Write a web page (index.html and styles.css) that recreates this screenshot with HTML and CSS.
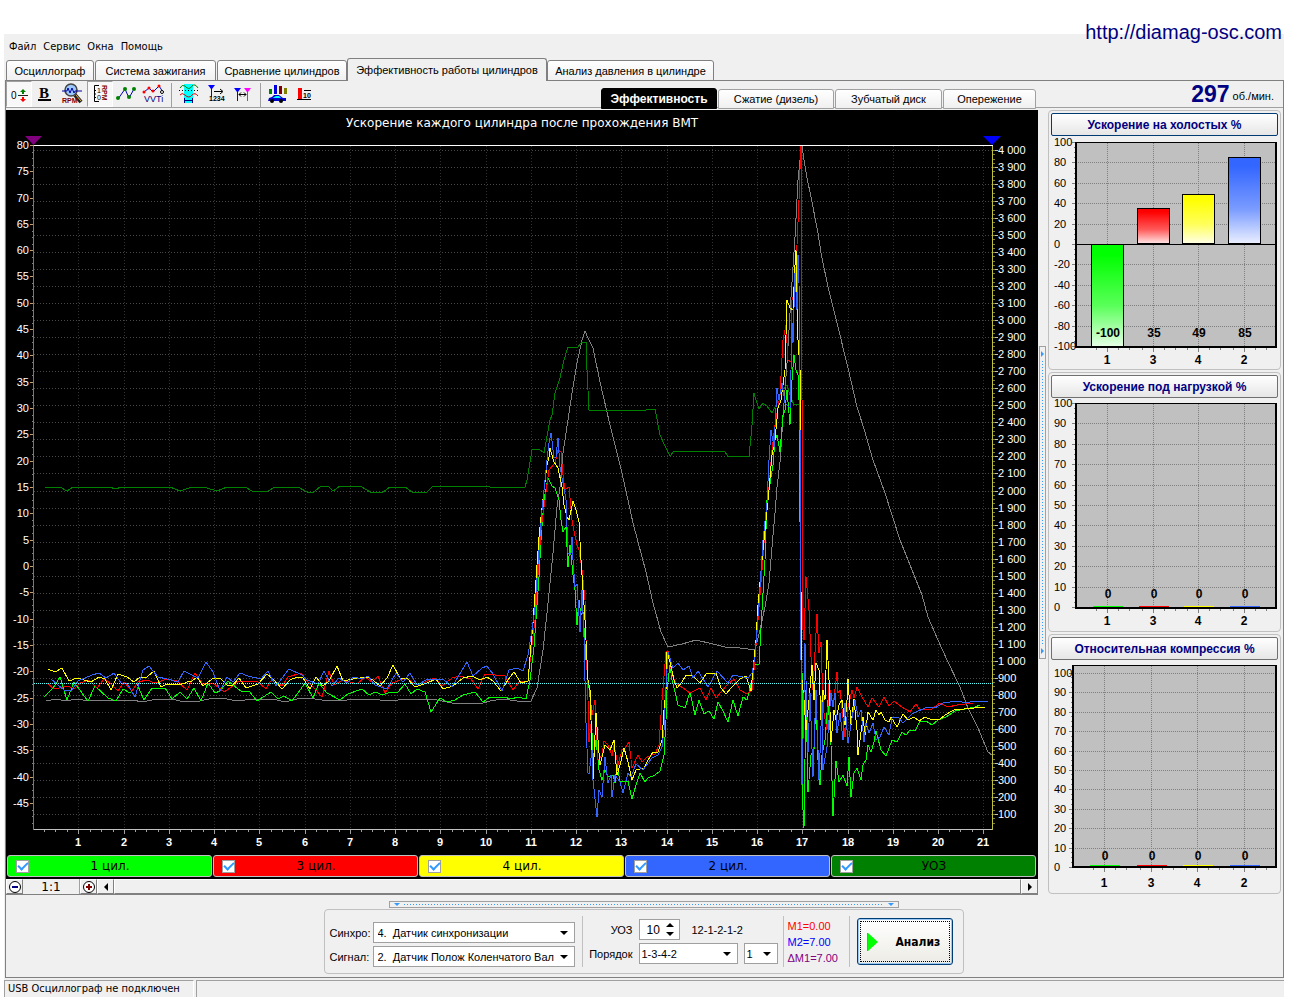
FILE: index.html
```html
<!DOCTYPE html>
<html lang="ru">
<head>
<meta charset="utf-8">
<title>Диамаг — эффективность работы цилиндров</title>
<link rel="stylesheet" href="styles.css">
</head>
<body>
<a class="site-link" href="#site">http://diamag-osc.com</a>
<div class="window">
  <nav class="menu">
    <a href="#file">Файл</a><a href="#service">Сервис</a><a href="#windows">Окна</a><a href="#help">Помощь</a>
  </nav>

  <div class="tabs">
    <button class="tab tab-osc">Осциллограф</button>
    <button class="tab tab-ign">Система зажигания</button>
    <button class="tab tab-cmp">Сравнение цилиндров</button>
    <button class="tab tab-eff active">Эффективность работы цилиндров</button>
    <button class="tab tab-prs">Анализ давления в цилиндре</button>
  </div>

  <main class="page">
    <div class="toolbar">
      <div class="tools">
        <button class="tool pressed" aria-label="Ноль"><svg viewBox="0 0 26 26"><text x="5" y="18" class="t10">0</text><path d="M12 14.500H22" stroke="#222" /><path d="M17 8l3 3h-2v2h-2v-2h-2z" fill="#008000"/><path d="M17 21l3-3h-2v-2h-2v2h-2z" fill="red"/></svg></button>
        <button class="tool" aria-label="Толщина"><svg viewBox="0 0 26 26"><text x="6" y="17" class="bold-b">B</text><path d="M5 19h13" stroke="#000" stroke-width="2"/></svg></button>
        <button class="tool" aria-label="Обороты"><svg viewBox="0 0 26 26"><path d="M15 14l6 7" stroke="#222" stroke-width="4"/><path d="M16 14l5 6" stroke="#e0b040" stroke-width="1"/><circle cx="11" cy="9" r="6" fill="#9cc8ff" stroke="#444" stroke-width="1.500"/><path d="M2 10h5l1-3 2 5 2-5 2 5 1-2h7" fill="none" stroke="#0000a0"/><text x="2" y="22" class="t7 maroon b">RPM</text></svg></button>
        <button class="tool pressed" aria-label="Шкала оборотов"><svg viewBox="0 0 26 26"><path d="M12 4.500H7.500V20.500H12M7 9.500h2M7 13h2M7 16.500h2" fill="none" stroke="#000"/><text x="10" y="12" class="t7">1</text><text x="10" y="19" class="t7">0</text><text transform="translate(15 4) rotate(90)" class="t7 maroon b">RPM</text></svg></button>
        <button class="tool" aria-label="График"><svg viewBox="0 0 26 26"><path d="M4 18L11 8l4 9 5-9" fill="none" stroke="#0000c0"/><g fill="#008000"><circle cx="4" cy="17" r="2"/><circle cx="11" cy="8" r="2"/><circle cx="15" cy="16" r="2"/><circle cx="20" cy="8" r="2"/></g></svg></button>
        <button class="tool" aria-label="VVTi"><svg viewBox="0 0 26 26"><path d="M3 11l5-4 4 4 6-6 4 6" fill="none" stroke="#0000d0"/><g fill="red"><circle cx="3" cy="11" r="1.500"/><circle cx="8" cy="7" r="1.500"/><circle cx="12" cy="10" r="1.500"/><circle cx="18" cy="5" r="1.500"/></g><circle cx="21" cy="11" r="1.500" fill="#fff" stroke="#000"/><text x="3" y="21" class="t9 navy">VVTi</text></svg></button>
        <span class="sep"></span>
        <button class="tool" aria-label="Окно сигнала"><svg viewBox="0 0 26 26"><path d="M8 3h9v19H8z" fill="#0ff"/><path d="M4 7q2-4 5-2 4 5 7 0 3-3 6 2" fill="none" stroke="#008000"/><path d="M4 14q2-3 5 0 4 4 7 0 3-3 6 1" fill="none" stroke="#e00000"/><path d="M3 9.500h20" stroke="#000" stroke-dasharray="1 2"/><path d="M8.500 17v5M16.500 17v5M9 19.500h7" stroke="#000080"/></svg></button>
        <button class="tool" aria-label="Номера"><svg viewBox="0 0 26 26"><path d="M5 4h7l-3 4v8H8V8z" fill="#0000ff"/><path d="M11 10.500h8M17 8l3 2.500-3 2.500" fill="none" stroke="#000"/><text x="6" y="20" class="t7 b">1234</text></svg></button>
        <button class="tool" aria-label="Маркеры"><svg viewBox="0 0 26 26"><path d="M4 7h7l-3 4v9H7v-9z" fill="#0000ff"/><path d="M14 7h7l-3 4v9h-1v-9z" fill="#f0f"/><path d="M9 13.500h7M11 11.500l-2 2 2 2M14 11.500l2 2-2 2" fill="none" stroke="#000"/></svg></button>
        <span class="sep"></span>
        <button class="tool" aria-label="Отчёт"><svg viewBox="0 0 26 26"><path d="M4 8h3v5H4z" fill="green"/><path d="M9 4h3v9H9z" fill="#0000e0"/><path d="M14 5h3v8h-3z" fill="#800000"/><path d="M19 7h3v6h-3z" fill="#808000"/><path d="M4 17q3 0 5-3h5l4 3h3v3H3z" fill="#0000d0"/><path d="M9 16l2-1h3l2 2H8z" fill="#0ff"/><circle cx="7" cy="20" r="2"/><circle cx="16" cy="20" r="2"/></svg></button>
        <button class="tool" aria-label="Порог"><svg viewBox="0 0 26 26"><path d="M6 7h4v11H6z" fill="red"/><path d="M5 18.500h14M12 9.500h7" stroke="#000"/><text x="11" y="17" class="t7 b">10</text></svg></button>
      </div>
      <div class="subtabs">
        <button class="subtab st-eff active">Эффективность</button>
        <button class="subtab st-cmp">Сжатие (дизель)</button>
        <button class="subtab st-gear">Зубчатый диск</button>
        <button class="subtab st-adv">Опережение</button>
      </div>
      <div class="rpm"><strong>297</strong> об./мин.</div>
    </div>

    <div class="workspace">
      <section class="scope">
        <svg id="scope" class="plot" viewBox="6 110 1032 744" role="img" aria-label="Ускорение каждого цилиндра"></svg>
        <div class="legend">
          <label class="series s1"><input type="checkbox" checked><span>1 цил.</span></label>
          <label class="series s3"><input type="checkbox" checked><span>3 цил.</span></label>
          <label class="series s4"><input type="checkbox" checked><span>4 цил.</span></label>
          <label class="series s2"><input type="checkbox" checked><span>2 цил.</span></label>
          <label class="series s5"><input type="checkbox" checked><span>УОЗ</span></label>
        </div>
        <div class="scroller">
          <button class="raised small" aria-label="Уменьшить"><svg viewBox="0 0 14 14"><circle cx="7" cy="7" r="5.500" fill="#fff" stroke="#000"/><path d="M4 7h6" stroke="#000080" stroke-width="2"/></svg></button>
          <span class="ratio">1:1</span>
          <button class="raised small" aria-label="Увеличить"><svg viewBox="0 0 14 14"><circle cx="7" cy="7" r="5.500" fill="#fff" stroke="#000"/><path d="M4 7h6M7 4v6" stroke="#800000" stroke-width="2"/></svg></button>
          <button class="raised small" aria-label="Влево"><svg viewBox="0 0 14 14"><path d="M9 3v8L5 7z"/></svg></button>
          <div class="raised thumb"></div>
          <button class="raised small" aria-label="Вправо"><svg viewBox="0 0 14 14"><path d="M5 3v8l4-4z"/></svg></button>
        </div>
      </section>

      <div class="vsplit"><i></i></div>

      <aside class="side">
        <section class="card"><button class="card-title focused">Ускорение на холостых %</button><svg id="idle" class="plot" viewBox="1051 136 227 232"></svg></section>
        <section class="card"><button class="card-title">Ускорение под нагрузкой %</button><svg id="load" class="plot" viewBox="1051 399 227 232"></svg></section>
        <section class="card"><button class="card-title">Относительная компрессия %</button><svg id="comp" class="plot" viewBox="1051 661 227 232"></svg></section>
      </aside>
    </div>

    <div class="hsplit"><i></i></div>

    <form class="panel" onsubmit="return false">
      <div class="inputs">
        <label for="sync">Синхро:</label>
        <span class="drop"><select id="sync"><option>4.&nbsp; Датчик синхронизации</option></select></span>
        <label for="signal">Сигнал:</label>
        <span class="drop"><select id="signal"><option>2.&nbsp; Датчик Полож Коленчатого Вала</option></select></span>
      </div>
      <div class="order">
        <label for="uoz">УОЗ</label>
        <div class="line"><span class="spin"><input id="uoz" type="text" value="10"></span><span>12-1-2-1-2</span></div>
        <label for="ord">Порядок</label>
        <div class="line"><span class="drop wide"><select id="ord"><option>1-3-4-2</option></select></span><span class="drop narrow"><select aria-label="Номер цилиндра"><option>1</option></select></span></div>
      </div>
      <div class="marks"><span class="m1">M1=0.00</span><span class="m2">M2=7.00</span><span class="dm">ΔM1=7.00</span></div>
      <button class="analyze" type="submit"><svg viewBox="0 0 12 20"><path d="M1 1l10 9-10 9z" fill="#00ff00"/><path d="M.500 1v18" stroke="#888"/></svg><span>Анализ</span></button>
    </form>
  </main>

  <footer class="status"><span>USB Осциллограф не подключен</span><span></span></footer>
</div>
<script src="charts.js"></script>
</body>
</html>
```

FILE: styles.css
```css
* { box-sizing: border-box; }

body {
  margin: 0;
  position: relative;
  background: #fff;
  color: #000;
  font: 11px/14px "Liberation Sans", Arial, sans-serif;
}

button, input, select { font: inherit; color: inherit; margin: 0; }
svg { display: block; }

.site-link {
  position: absolute;
  top: 20px;
  right: 14px;
  font-size: 20px;
  line-height: 24px;
  color: #000080;
  text-decoration: none;
}

.window {
  margin: 34px 12px 0 4px;
  background: #f0f0f0;
}

.menu {
  display: flex;
  gap: 7px;
  height: 24px;
  padding: 6px 5px 0;
  font-family: "DejaVu Sans Condensed", "DejaVu Sans", sans-serif;
}
.menu a { color: #000; text-decoration: none; }

/* Main tabs */
.tabs {
  display: flex;
  align-items: flex-end;
  gap: 1px;
  height: 23px;
  padding-left: 2px;
  margin-bottom: -1px;
  position: relative;
}
.tab, .subtab {
  height: 21px;
  padding: 0;
  border: 1px solid #808080;
  border-radius: 3px 3px 0 0;
  background: linear-gradient(#fff, #f0f0f0);
  white-space: nowrap;
}
.tab-osc { width: 88px; }
.tab-ign { width: 121px; }
.tab-cmp { width: 130px; }
.tab-eff { width: 200px; }
.tab-prs { width: 167px; }
.tab.active { height: 23px; border-bottom: 0; background: #f0f0f0; margin: 0 -1px; }

.page {
  margin-left: 1px;
  padding-right: 2px;
  border: 1px solid #808080;
}

/* Toolbar */
.toolbar {
  display: grid;
  grid-template-columns: 595px minmax(0, 1fr) auto;
  height: 27px;
  margin-right: -2px;
  border-bottom: 1px solid #a0a0a0;
}
.tools { display: flex; gap: 1px; }
.tool { width: 26px; height: 26px; padding: 0; border: 0; background: none; }
.tool svg { width: 26px; height: 26px; }
.tool.pressed { background: #f8f8f8; border: 1px solid; border-color: #a0a0a0 #fff #fff #a0a0a0; }
.tool.pressed svg { margin: -1px; }
.sep { width: 1px; margin: 2px 3px; background: #a0a0a0; }
.t7 { font-size: 7px; }
.t9 { font-size: 9px; }
.t10 { font-size: 10px; }
.b { font-weight: bold; }
.maroon { fill: #800000; }
.navy { fill: #000080; }
.bold-b { font: bold 15px "Liberation Serif", serif; }

.subtabs { display: flex; align-items: flex-end; gap: 1px; }
.subtab { height: 20px; border-color: #a0a0a0; }
.subtab.active { height: 21px; background: #000; color: #fff; border-color: #000; font-weight: bold; font-size: 12px; }
.st-eff { width: 116px; }
.st-cmp { width: 116px; }
.st-gear { width: 107px; }
.st-adv { width: 93px; }

.rpm { padding: 0 9px 0 0; line-height: 26px; white-space: nowrap; }
.rpm strong { font-size: 23px; color: #000080; vertical-align: -2px; }

/* Work area */
.workspace {
  display: grid;
  grid-template-columns: minmax(0, 1fr) 10px 233px;
  padding-top: 2px;
  align-items: start;
}
.plot { width: 100%; height: auto; font-family: "Liberation Sans", Arial, sans-serif; }
.plot text { font-size: 11px; }
.plot .title { font-family: "DejaVu Sans", sans-serif; font-size: 12px; }
.plot .strong { font-weight: bold; }
.plot .value { font-size: 12px; font-weight: bold; }
.scope { background: #000; }

.legend {
  display: grid;
  grid-template-columns: repeat(5, minmax(0, 1fr));
  gap: 1px;
  padding: 1px 2px 2px 1px;
}
.series {
  display: flex;
  align-items: center;
  height: 22px;
  padding-left: 8px;
  border: 1px solid #c0c0c0;
  border-radius: 3px;
  font: 12px/20px "DejaVu Sans", sans-serif;
}
.series span { flex: 1; text-align: center; padding-right: 20px; }
.s1 { background: #00ff00; }
.s3 { background: #ff0000; }
.s4 { background: #ffff00; }
.s2 { background: #3366ff; }
.s5 { background: #008000; }
.series input {
  appearance: none;
  width: 13px;
  height: 13px;
  border: 1px solid #a0a0a0;
  background: #fff;
  display: grid;
  place-items: center;
}
.series input:checked::after {
  content: "";
  width: 8px;
  height: 4px;
  margin-top: -2px;
  border: solid #3399ff;
  border-width: 0 0 2px 2px;
  transform: rotate(-45deg);
}

.scroller {
  display: grid;
  grid-template-columns: 17px 57px 17px 17px minmax(0, 1fr) 17px;
  grid-template-rows: 15px;
  border-bottom: 1px solid #808080;
  background: #f0f0f0;
}
.raised {
  padding: 0;
  border: 1px solid;
  border-color: #fff #808080 #808080 #fff;
  background: #f0f0f0;
  display: grid;
  place-items: center;
  overflow: hidden;
}
.raised svg { width: 14px; height: 14px; }
.ratio {
  border-right: 1px solid #a0a0a0;
  text-align: center;
  font: 12px/17px "DejaVu Sans", sans-serif;
}

.vsplit { align-self: center; justify-self: end; width: 7px; height: 313px; margin-right: 2px; border: 1px solid #a0a0a0; display: grid; position: relative; }
.vsplit i { width: 1px; margin: 14px 2px; background: repeating-linear-gradient(#3399ff 0 1px, transparent 1px 3px); }
.vsplit::before, .vsplit::after { content: ""; position: absolute; left: 1px; border: solid transparent; border-width: 3px 0 3px 3px; border-left-color: #3399ff; }
.vsplit::before { top: 4px; }
.vsplit::after { bottom: 4px; }

/* Side charts */
.side { display: grid; gap: 2px; }
.card { border: 1px solid #c0c0c0; border-radius: 4px; padding: 2px 2px 1px; }
.card-title {
  display: block;
  width: 100%;
  height: 23px;
  padding: 0;
  border: 1px solid #707070;
  border-radius: 2px;
  background: linear-gradient(#fff, #e6e6e6);
  color: #000080;
  font-weight: bold;
  font-size: 12px;
}
.card-title.focused { border-color: #003c74; }

.hsplit { width: 510px; height: 7px; margin: 6px auto 0; border: 1px solid #a0a0a0; position: relative; display: grid; }
.hsplit i { height: 1px; margin: 2px 14px; background: repeating-linear-gradient(90deg, #3399ff 0 1px, transparent 1px 3px); }
.hsplit::before, .hsplit::after { content: ""; position: absolute; top: 1px; border: solid transparent; border-width: 3px 3px 0; border-top-color: #3399ff; }
.hsplit::before { left: 4px; }
.hsplit::after { right: 4px; }

/* Control panel */
.panel {
  display: grid;
  grid-template-columns: 245px 194px 67px 96px;
  gap: 7px;
  width: 640px;
  height: 65px;
  margin: 1px auto 3px;
  padding: 6px 5px;
  border: 1px solid #c0c0c0;
  border-radius: 4px;
}
.inputs {
  display: grid;
  grid-template-columns: 39px 202px;
  column-gap: 4px;
  row-gap: 3px;
  align-content: end;
  align-items: center;
}
.drop { display: block; position: relative; height: 21px; border: 1px solid #a0a0a0; background: #fff; }
.drop select { appearance: none; width: 100%; height: 19px; padding: 0 20px 0 4px; border: 0; background: none; }
.drop::after { content: ""; position: absolute; right: 6px; top: 8px; border: solid transparent; border-width: 4px 4px 0; border-top-color: #000; pointer-events: none; }
.order {
  display: grid;
  grid-template-columns: 50px 139px;
  column-gap: 6px;
  row-gap: 3px;
  align-content: center;
  align-items: center;
  border-left: 1px solid #c0c0c0;
}
.order label { text-align: right; }
.line { display: flex; gap: 6px; align-items: center; white-space: nowrap; }
.wide { width: 99px; flex: none; }
.drop.wide select { padding-left: 2px; }
.narrow { width: 34px; flex: none; }
.drop.narrow select { padding: 0 0 0 2px; }
.spin { position: relative; width: 41px; height: 21px; margin-right: 6px; border: 1px solid #a0a0a0; background: #fff; }
.spin input { width: 26px; height: 19px; padding: 0 0 0 7px; border: 0; background: none; font-size: 12px; }
.spin::before, .spin::after { content: ""; position: absolute; right: 5px; border: solid transparent; }
.spin::before { top: 3px; border-width: 0 4px 4px; border-bottom-color: #000; }
.spin::after { bottom: 3px; border-width: 4px 4px 0; border-top-color: #000; }
.marks { display: grid; align-content: center; grid-auto-rows: 16px; padding-left: 4px; border: solid #c0c0c0; border-width: 0 1px; line-height: 16px; white-space: nowrap; }
.m1 { color: #ff0000; }
.m2 { color: #0000ff; }
.dm { color: #800080; }
.analyze {
  align-self: center;
  display: flex;
  align-items: center;
  gap: 17px;
  height: 47px;
  padding: 0 9px;
  border: 1px solid #003c74;
  border-radius: 3px;
  background: linear-gradient(#fff, #ecebe5);
  box-shadow: inset 0 0 0 1px #9cc8f5;
  outline: 1px dotted #000;
  outline-offset: -4px;
  font: bold 12px/14px "DejaVu Sans Condensed", "DejaVu Sans", sans-serif;
}
.analyze svg { width: 12px; height: 20px; }

.status { display: grid; grid-template-columns: 190px minmax(0, 1fr); gap: 2px; height: 19px; padding-top: 2px; font: 11px/16px "DejaVu Sans Condensed", "DejaVu Sans", sans-serif; }
.status span { border: solid #a0a0a0; border-width: 1px 0 0 1px; padding-left: 3px; }
.status span:first-child { border-right-width: 1px; border-right-color: #fff; }
```

FILE: charts.js
```js
const NS = 'http://www.w3.org/2000/svg';

function add(parent, tag, attrs, text) {
  const el = document.createElementNS(NS, tag);
  for (const key in attrs) el.setAttribute(key, attrs[key]);
  if (text !== undefined) el.textContent = text;
  parent.appendChild(el);
  return el;
}

function line(svg, x1, y1, x2, y2, stroke, dash) {
  const attrs = { x1: x1 + 0.5, y1: y1 + 0.5, x2: x2 + 0.5, y2: y2 + 0.5, stroke, 'shape-rendering': 'crispEdges' };
  if (dash) attrs['stroke-dasharray'] = dash;
  return add(svg, 'line', attrs);
}

function label(svg, x, y, text, anchor, fill, cls) {
  add(svg, 'text', { x, y, 'text-anchor': anchor, fill, class: cls || '' }, text);
}

const traces = [
  ['#808080', '46,701 57,699 65,701 78,699 88,701 98,700 133,700 142,702 157,699 172,699 180,701 200,701 213,698 227,699 237,701 253,699 277,700 285,702 297,699 307,698 322,700 340,701 355,699 370,699 390,701 407,699 432,699 452,703 483,703 490,701 503,699 517,701 531,701 537,688 543,650 547,613 550,583 553,553 557,507 560,487 563,453 568,420 572,393 577,363 582,340 585,331 588,338 593,348 600,382 610,425 622,473 633,523 646,572 653,603 661,632 668,647 682,644 696,640 713,644 725,647 740,648 755,650 760,630 765,607 769,583 772,547 775,513 777,487 780,462 783,417 787,363 791,297 795,237 798,180 801,150 802,146 804,160 807,178 811,197 818,233 821,253 828,287 837,323 848,368 857,407 865,432 873,460 885,493 900,540 922,595 928,617 938,640 947,660 960,687 968,708 978,728 988,752 992,755'],
  ['#008000', '45,487 60,487 67,491 73,487 110,487 115,489 122,487 170,487 180,491 192,487 207,488 217,491 227,487 245,487 252,491 268,491 275,487 298,487 307,492 314,492 321,486 328,486 333,491 340,486 362,487 370,492 383,492 390,487 405,487 412,492 427,492 432,487 440,486 485,486 490,487 525,487 527,480 532,450 539,449 544,453 550,420 552,415 555,393 560,378 564,360 568,347 578,347 581,343 586,342 587,370 589,410 646,410 655,409 660,435 665,446 670,456 674,451 707,451 709,452 724,451 728,456 749,457 752,425 754,393 756,400 759,409 763,403 767,406 772,413 777,403 782,390 787,385 790,395 794,405 800,404'],
  ['#00ff00', '44,697 53,688 60,677 67,700 74,682 82,693 88,701 95,686 108,698 116,701 123,689 130,693 137,684 144,700 152,688 165,688 172,699 180,692 187,699 194,688 201,701 208,683 215,693 220,691 228,681 242,692 249,691 257,701 271,692 278,699 284,696 292,701 298,693 305,683 313,698 319,683 327,693 340,700 348,694 362,689 369,695 375,692 383,695 390,692 397,693 405,684 411,694 417,689 425,692 431,712 440,698 447,702 455,700 463,695 475,692 483,702 490,697 504,697 511,699 518,697 526,699 530,680 534,647 539,577 541,540 544,500 548,478 552,486 555,488 559,500 561,520 563,532 566,527 568,567 570,545 573,575 575,590 577,625 579,600 581,615 583,612 586,660 588,680 591,705 593,760 596,740 599,770 602,780 605,770 608,777 613,775 615,783 617,765 620,782 628,781 632,799 636,785 640,773 645,782 648,778 655,775 660,771 664,755 666,720 667,690 670,665 672,680 675,692 678,705 685,708 690,692 695,715 699,700 704,714 709,711 714,719 718,702 723,711 728,722 733,700 738,716 743,697 747,700 752,680 755,665 759,664 762,610 765,560 767,500 769,490 773,465 775,440 777,435 780,452 783,415 785,410 787,390 790,425 792,380 794,355 796,370 798,375 799,400 801,640 802,670 803,810 804,828 805,760 806,690 808,792 811,755 814,750 816,700 818,760 820,785 822,755 825,740 828,700 831,745 833,816 836,761 839,782 843,775 847,786 849,757 851,797 854,773 857,768 861,780 863,765 866,760 868,745 871,752 874,742 876,731 881,750 886,756 892,740 897,742 902,732 906,735 910,730 915,731 920,721 926,721 932,725 938,720 946,717 955,711 965,709 975,707 980,705'],
  ['#ff0000', '47,683 54,689 68,686 74,689 80,683 89,680 97,688 104,679 110,683 118,691 124,682 132,691 138,682 147,680 155,683 167,679 177,681 187,690 195,673 202,683 213,683 224,692 233,686 238,681 257,681 266,689 272,679 282,686 288,677 301,673 308,682 315,689 322,697 329,671 334,685 343,680 357,684 365,677 372,682 378,676 385,693 392,683 406,678 417,685 435,678 442,686 452,678 460,676 471,679 478,689 485,674 505,676 513,690 519,682 528,681 531,653 535,620 537,590 541,530 546,492 549,470 555,463 558,450 561,452 563,475 565,490 569,487 572,520 574,531 577,545 579,550 582,570 585,600 586,640 588,700 589,742 592,715 595,700 598,760 602,755 604,741 608,745 612,756 614,745 618,765 622,750 625,748 629,742 632,768 638,755 642,762 647,757 655,754 659,745 662,700 666,652 668,651 672,675 676,683 683,688 690,693 700,688 706,700 711,688 716,698 721,692 727,685 734,679 740,690 747,694 752,690 754,670 756,645 758,620 762,570 765,530 768,500 772,450 775,425 778,407 780,395 783,340 786,325 788,360 791,362 792,300 795,290 797,245 799,200 800,170 801,146 802,400 802,620 804,640 806,577 809,610 811,657 813,690 817,614 819,653 821,642 822,673 824,713 827,730 829,684 833,707 837,672 838,693 840,690 845,737 848,707 852,690 854,698 857,687 862,697 868,707 872,698 879,707 884,697 889,706 894,701 902,707 910,712 916,704 920,710 932,709 940,703 948,707 957,705 973,703'],
  ['#ffff00', '48,669 55,672 62,668 69,681 77,678 91,682 99,677 105,679 111,690 118,674 127,677 134,682 140,677 147,677 154,671 161,687 167,684 180,685 187,682 192,681 197,677 203,686 212,679 220,678 227,685 232,686 239,678 246,688 258,684 267,674 273,679 282,689 290,680 297,677 303,678 310,689 316,677 323,686 329,681 337,666 343,681 353,679 367,677 373,680 380,686 387,678 393,665 400,678 407,678 415,687 427,683 436,679 443,689 453,686 463,678 472,676 480,680 487,677 493,681 501,691 508,680 514,672 521,683 528,681 530,657 533,623 536,580 539,537 541,517 544,490 547,465 549,457 550,448 554,462 558,468 562,487 564,505 567,517 569,520 573,501 576,510 579,522 581,560 583,590 585,620 587,660 588,680 590,690 592,750 593,780 596,713 598,740 600,765 605,745 610,750 614,740 617,775 620,765 624,748 628,762 632,780 636,770 644,768 648,760 653,752 658,752 662,740 664,710 666,690 667,652 670,662 674,680 677,688 682,682 686,675 692,675 700,683 706,674 716,673 721,688 726,694 732,687 740,679 746,676 751,691 753,670 756,640 758,605 762,560 766,520 769,490 772,455 775,440 778,408 781,400 785,370 787,300 790,308 793,310 795,265 796,250 798,340 800,370 800,500 802,680 804,700 806,730 809,700 812,665 814,700 816,663 819,670 821,720 823,690 825,700 827,640 829,680 831,742 834,710 836,720 839,705 842,700 845,725 847,700 848,679 851,725 854,699 857,730 858,755 863,717 865,735 868,712 873,720 876,710 879,715 881,712 885,720 889,722 891,717 897,727 903,714 908,720 914,717 919,721 925,717 932,720 940,719 945,715 954,710 964,709 985,707'],
  ['#3366ff', '51,679 64,690 72,690 78,681 92,675 99,673 106,678 114,673 121,683 127,683 135,697 143,670 149,666 158,677 167,679 178,682 184,671 198,678 206,662 213,672 220,691 227,677 233,682 240,673 248,676 261,679 268,671 276,686 289,669 302,675 307,680 318,684 324,671 332,686 339,678 347,683 353,677 362,679 368,676 375,685 387,689 396,673 403,682 410,673 417,685 428,679 443,679 452,687 458,677 467,662 473,676 482,668 487,666 493,674 502,691 509,670 517,668 523,671 528,655 532,630 535,607 539,550 542,510 547,460 549,443 551,433 554,458 556,457 558,438 560,467 563,483 566,500 568,553 571,553 572,537 573,560 575,587 577,584 580,632 582,590 584,637 586,723 588,773 589,774 592,750 593,780 597,817 599,790 602,797 605,757 608,783 611,775 612,797 615,775 620,782 623,793 628,773 631,777 636,764 643,770 652,758 658,755 662,747 664,730 666,687 668,652 673,668 678,663 683,670 689,666 693,678 698,671 708,687 717,671 728,683 733,675 748,678 752,673 755,657 759,603 763,540 767,503 769,460 771,430 774,447 777,388 779,400 782,383 785,403 790,408 791,370 792,323 793,343 795,273 797,310 798,255 799,283 800,430 801,660 802,785 804,693 805,643 808,753 810,693 813,777 816,690 819,780 822,700 823,770 827,747 831,693 833,707 835,693 837,733 840,713 843,740 845,703 848,743 855,700 858,717 861,710 864,742 866,723 869,733 873,723 876,740 880,737 884,727 889,735 892,718 898,717 903,723 912,714 927,707 935,708 943,703 957,701 967,703 973,701 988,701'],
];

function drawScope(svg) {
  const left = 33, right = 992, top = 145, bottom = 829;
  add(svg, 'rect', { x: 6, y: 110, width: 1032, height: 744, fill: '#000' });
  label(svg, 522, 127, 'Ускорение каждого цилиндра после прохождения ВМТ', 'middle', '#fff', 'title');

  // Right scale sets the horizontal grid
  for (let v = 100; v <= 4000; v += 100) {
    const y = Math.round(814 - (v - 100) * 664 / 3900);
    line(svg, left, y, right, y, '#484848', '1 2');
    line(svg, right, y, right + 5, y, '#c0c0c0');
    label(svg, 998, y + 4, v >= 1000 ? Math.floor(v / 1000) + ' ' + String(v % 1000).padStart(3, '0') : v, 'start', '#fff');
  }
  for (let v = 50; v <= 4000; v += 25) {
    const y = Math.round(814 - (v - 100) * 664 / 3900);
    line(svg, right, y, right + 2, y, '#808040');
  }
  for (let v = -45; v <= 80; v += 5) {
    const y = Math.round(566 - v * 5.264);
    line(svg, left - 4, y, left, y, '#c0a070');
    for (let k = 1; k < 4; k++) line(svg, left - 2, Math.round(y + k * 6.5), left, Math.round(y + k * 6.5), '#808080');
    label(svg, 29, y + 4, v, 'end', '#fff');
  }
  for (let n = 1; n <= 21; n++) {
    const x = Math.round(left + n * 45.25);
    line(svg, x, top, x, bottom, '#303030', '1 2');
    for (let k = 0; k < 4; k++) {
      const tx = Math.round(x - k * 11.3);
      line(svg, tx, bottom, tx, bottom + (k ? 2 : 4), '#a0a0a0');
    }
    label(svg, x, 846, n, 'middle', '#fff', 'strong');
  }
  line(svg, left, top, right, top, '#fff');
  line(svg, left, bottom, right, bottom, '#c0c0c0');
  line(svg, left, top, left, bottom, '#40a040');
  line(svg, right, top, right, bottom, '#c0c040');
  for (const [stroke, points] of traces) {
    add(svg, 'polyline', { points, stroke, fill: 'none', 'shape-rendering': 'crispEdges' });
  }
  line(svg, left, 683, right, 683, '#60ffff', '1 1');
  add(svg, 'path', { d: 'M25 136h17l-8.500 9z', fill: '#800080' });
  add(svg, 'path', { d: 'M983 136h18l-9 9z', fill: '#0000ff' });
}

const colors = ['#00ff00', '#ff0000', '#ffff00', '#3366ff'];
const names = [1, 3, 4, 2];

function drawBars(id, o) {
  const svg = document.getElementById(id);
  const defs = add(svg, 'defs', {});
  add(svg, 'rect', { x: o.left, y: o.top, width: 1276 - o.left, height: o.bottom - o.top, fill: '#c0c0c0' });
  const count = (o.max - o.min) / o.step;
  for (let i = 0; i <= count; i++) {
    const y = Math.round(o.y0 - i * (o.y0 - o.y100) / count);
    line(svg, o.left, y, 1276, y, '#808080', '1 1');
    line(svg, o.left - 4, y, o.left, y, '#808080');
    if (i < count) for (let k = 1; k < 4; k++) line(svg, o.left - 2, y - k * 5, o.left, y - k * 5, '#808080');
    label(svg, 1054, y + 4, o.min + i * o.step, 'start', '#000');
  }
  o.xs.forEach((x, i) => {
    line(svg, x, o.top, x, o.bottom, '#808080', '1 1');
    for (let k = -1; k < 3; k++) line(svg, x + k * 11, o.bottom, x + k * 11, o.bottom + (k ? 2 : 4), '#808080');
    label(svg, x, o.bottom + o.nameGap, names[i], 'middle', '#000', 'value');
  });
  const zero = Math.round(o.y0 + o.min * (o.y0 - o.y100) / (o.max - o.min));
  line(svg, o.left, zero, 1276, zero, '#000');
  o.values.forEach((v, i) => {
    if (!v) return;
    const gid = id + '-fill-' + names[i];
    const g = add(defs, 'linearGradient', { id: gid, x1: 0, y1: 0, x2: 0, y2: 1 });
    add(g, 'stop', { offset: 0.1, 'stop-color': colors[i] });
    add(g, 'stop', { offset: 0.6, 'stop-color': colors[i], 'stop-opacity': 0.65 });
    add(g, 'stop', { offset: 1, 'stop-color': colors[i], 'stop-opacity': 0.1 });
    const h = Math.round(Math.abs(v) * 1.02);
    const box = { x: o.xs[i] - 15.5, y: (v > 0 ? zero - h : zero) + 0.5, width: 32, height: h - (v > 0 ? 1 : 0) };
    add(svg, 'rect', { ...box, fill: '#fff' });
    add(svg, 'rect', { ...box, fill: 'url(#' + gid + ')', stroke: '#000' });
  });
  add(svg, 'path', { d: `M${o.left} ${o.top + 0.5}H1276`, stroke: '#000' });
  add(svg, 'path', { d: `M${o.left + 0.5} ${o.top}V${o.bottom}H1276V${o.top}`, fill: 'none', stroke: '#000', 'stroke-width': 2, 'shape-rendering': 'crispEdges' });
  o.values.forEach((v, i) => {
    if (!v) line(svg, o.xs[i] - 15, o.bottom - 2, o.xs[i] + 15, o.bottom - 2, colors[i]);
    label(svg, o.xs[i] + 1, o.bottom - o.valueGap, v, 'middle', '#000', 'value');
  });
}

drawScope(document.getElementById('scope'));
drawBars('idle', { left: 1075, top: 142, bottom: 347, y100: 142, y0: 346, min: -100, max: 100, step: 20, xs: [1107, 1153, 1198, 1244], values: [-100, 35, 49, 85], nameGap: 17, valueGap: 10 });
drawBars('load', { left: 1075, top: 404, bottom: 609, y100: 404, y0: 608, min: 0, max: 100, step: 10, xs: [1107, 1153, 1198, 1244], values: [0, 0, 0, 0], nameGap: 17, valueGap: 10 });
drawBars('comp', { left: 1072, top: 666, bottom: 868, y100: 674, y0: 868, min: 0, max: 100, step: 10, xs: [1104, 1151, 1197, 1244], values: [0, 0, 0, 0], nameGap: 20, valueGap: 7 });
```
